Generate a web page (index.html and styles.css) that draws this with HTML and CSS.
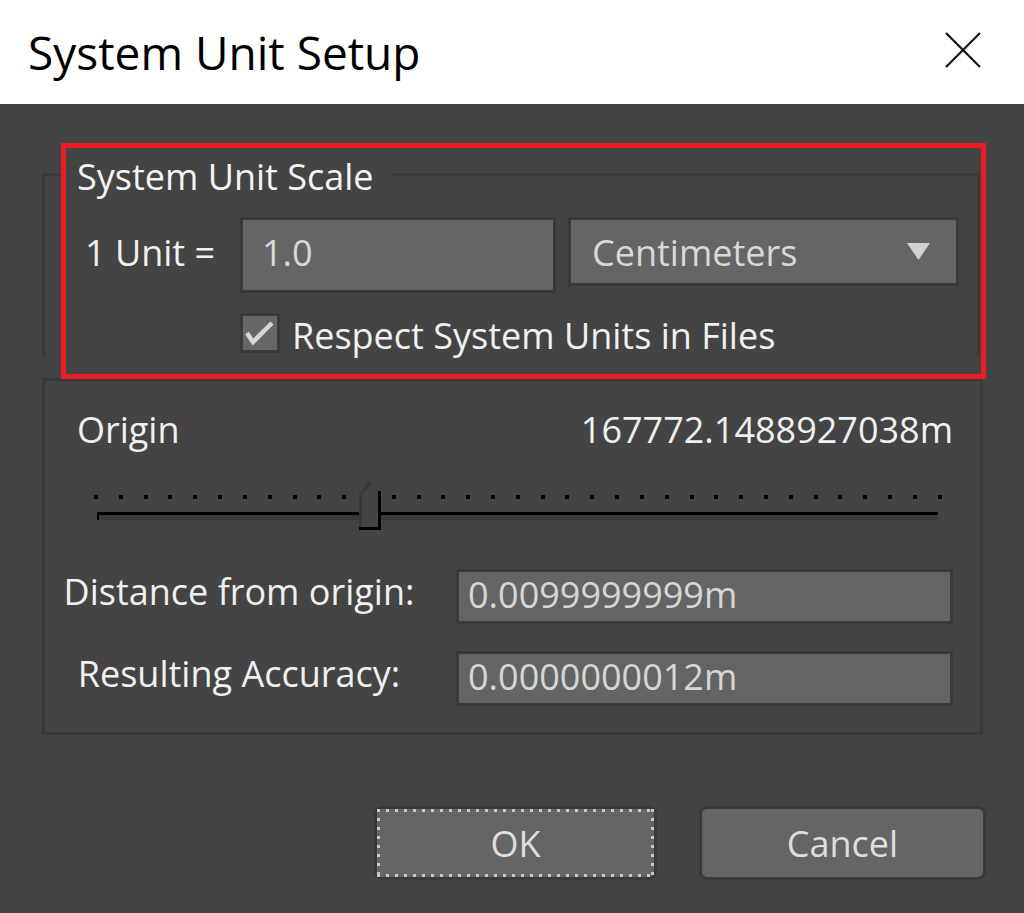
FILE: index.html
```html
<!DOCTYPE html>
<html lang="en">
<head>
<meta charset="utf-8">
<title>System Unit Setup</title>
<link rel="stylesheet" href="styles.css">
</head>
<body>
<div class="dialog">
  <header class="titlebar">
    <span class="title">System Unit Setup</span>
    <svg class="close" width="36" height="36" viewBox="0 0 36 36" aria-label="Close">
      <path d="M1 1 L35 35 M35 1 L1 35" stroke="#111" stroke-width="2.2" fill="none"/>
    </svg>
  </header>

  <main class="content">
    <fieldset class="group scale-group">
      <legend>System Unit Scale</legend>
      <div class="scale-grid">
        <span class="unit-label">1 Unit =</span>
        <div class="unit-fields">
          <div class="num-field">1.0</div>
          <div class="combo">
            <span>Centimeters</span>
            <svg class="combo-arrow" width="23" height="17" viewBox="0 0 23 17"><path d="M0 0 H23 L11.5 17 Z" fill="#d2d2d2"/></svg>
          </div>
        </div>
        <div class="check-row">
          <span class="checkbox">
            <svg width="34" height="34" viewBox="0 0 34 34"><path d="M4 17 L10 26 L29 7" stroke="#d6d6d6" stroke-width="4.5" fill="none"/></svg>
          </span>
          <span class="check-label">Respect System Units in Files</span>
        </div>
      </div>
    </fieldset>

    <section class="group origin-group">
      <div class="origin-row">
        <span>Origin</span>
        <span>167772.1488927038m</span>
      </div>
      <div class="slider">
        <div class="ticks">
          <i></i><i></i><i></i><i></i><i></i><i></i><i></i><i></i><i></i><i></i><i></i><i></i><i></i><i></i><i></i><i></i><i></i><i></i><i></i><i></i><i></i><i></i><i></i><i></i><i></i><i></i><i></i><i></i><i></i><i></i><i></i><i></i><i></i><i></i><i></i>
        </div>
        <div class="track"></div>
        <svg class="thumb" width="24" height="50" viewBox="0 0 24 50">
          <path d="M0 14 L11 1 L20 12 V47 H0 Z" fill="#444"/>
          <path d="M1.5 47 V14.5 L11 3" stroke="#383838" stroke-width="3" fill="none"/>
          <path d="M20.5 11 V48.5 H0" stroke="#000" stroke-width="3" fill="none"/>
        </svg>
      </div>
      <div class="info-grid">
        <span class="info-label">Distance from origin:</span>
        <div class="info-field">0.0099999999m</div>
        <span class="info-label">Resulting Accuracy:</span>
        <div class="info-field">0.0000000012m</div>
      </div>
    </section>

    <div class="buttons">
      <button class="btn btn-focus">OK</button>
      <button class="btn">Cancel</button>
    </div>
  </main>

  <div class="highlight"></div>
</div>
</body>
</html>
```

FILE: styles.css
```css
html, body {
  margin: 0;
  padding: 0;
}

body {
  width: 1024px;
  height: 913px;
  overflow: hidden;
  background: #444444;
  font-family: "Open Sans", "Noto Sans", sans-serif;
  color: #f0f0f0;
}

.dialog {
  position: relative;
  width: 1024px;
  height: 913px;
}

/* Title bar */
.titlebar {
  height: 104px;
  background: #ffffff;
  display: flex;
  justify-content: space-between;
  align-items: flex-start;
  padding: 0 43px 0 28px;
  box-sizing: border-box;
}

.title {
  font-size: 46px;
  line-height: 46px;
  margin-top: 29px;
  color: #000;
}

.close {
  margin-top: 32px;
  display: block;
}

/* Content */
.content {
  padding: 48px 41px 0 42px;
}

.group {
  border: 3px solid #3a3a3a;
  box-sizing: border-box;
}

.scale-group {
  margin: 0 3px 0 0;
  border-bottom: 0;
  padding: 21px 18px 1px 22px;
  min-inline-size: 0;
}

.scale-group legend {
  font-size: 36px;
  line-height: 39px;
  padding: 5px 18px 0 10px;
  color: #f4f4f4;
}

.scale-grid {
  display: grid;
  grid-template-columns: 155px auto;
  row-gap: 20px;
  margin-left: 18px;
}

.unit-label {
  font-size: 36px;
  line-height: 72px;
  white-space: nowrap;
}

.unit-fields {
  display: flex;
  align-items: flex-start;
  gap: 12px;
}

.num-field {
  width: 316px;
  height: 76px;
  box-sizing: border-box;
  border: 3px solid #3a3a3a;
  background: #656565;
  padding-left: 19px;
  font-size: 36px;
  line-height: 66px;
  color: #d8d8d8;
}

.combo {
  width: 391px;
  height: 69px;
  box-sizing: border-box;
  border: 3px solid #3a3a3a;
  background: #656565;
  padding: 0 26px 0 21px;
  display: flex;
  justify-content: space-between;
  align-items: center;
  font-size: 36px;
  color: #d8d8d8;
}

.combo span {
  align-self: flex-start;
  line-height: 66px;
}

.combo-arrow {
  display: block;
}

.check-row {
  grid-column: 2;
  display: flex;
  align-items: flex-start;
  gap: 12px;
}

.checkbox {
  width: 40px;
  height: 40px;
  box-sizing: border-box;
  border: 3px solid #3a3a3a;
  background: #676767;
  display: flex;
  align-items: center;
  justify-content: center;
}

.checkbox svg {
  display: block;
}

.check-label {
  font-size: 36px;
  line-height: 40px;
  padding-top: 3px;
  white-space: nowrap;
}

/* Origin group */
.origin-group {
  margin-top: 21px;
  width: 941px;
  padding: 27px 27px 26px 0;
}

.origin-row {
  display: flex;
  justify-content: space-between;
  padding-left: 32px;
  font-size: 36px;
  line-height: 44px;
}

.slider {
  position: relative;
  margin: 28px 0 0 49px;
  width: 848px;
  height: 50px;
  padding-top: 15px;
  box-sizing: border-box;
}

.ticks {
  display: flex;
  justify-content: space-between;
  height: 4px;
}

.ticks i {
  width: 4px;
  height: 4px;
  background: #000;
}

.track {
  margin: 13px 4px 0 3px;
  height: 8px;
  box-sizing: border-box;
  border-top: 3px solid #000;
  border-left: 2px solid #000;
  background: #393939;
}

.thumb {
  position: absolute;
  left: 265px;
  top: 0;
  display: block;
}

.info-grid {
  display: grid;
  grid-template-columns: 388px 497px;
  column-gap: 23px;
  row-gap: 27px;
  margin-top: 39px;
}

.info-label {
  text-align: center;
  font-size: 36px;
  line-height: 46px;
  white-space: nowrap;
}

.info-field {
  height: 55px;
  box-sizing: border-box;
  border: 3px solid #3a3a3a;
  background: #646464;
  padding-left: 9px;
  font-size: 36px;
  line-height: 46px;
  color: #d6d6d6;
}

/* Buttons */
.buttons {
  display: flex;
  justify-content: flex-end;
  gap: 42px;
  margin: 71px -3px 0 0;
}

.btn {
  position: relative;
  height: 74px;
  box-sizing: border-box;
  border: 3px solid #3a3a3a;
  border-radius: 8px;
  background: #656565;
  color: #dedede;
  font-family: inherit;
  font-size: 36px;
  line-height: 70px;
  padding: 0;
  width: 287px;
}

.btn-focus {
  width: 283px;
}

.btn-focus::after {
  content: "";
  position: absolute;
  inset: 0;
  background:
    repeating-linear-gradient(to right, #c8c8c8 0 3px, transparent 3px 9px) top left / 100% 3px no-repeat,
    repeating-linear-gradient(to right, #c8c8c8 0 3px, transparent 3px 9px) bottom left / 100% 3px no-repeat,
    repeating-linear-gradient(to bottom, #c8c8c8 0 3px, transparent 3px 9px) top left / 3px 100% no-repeat,
    repeating-linear-gradient(to bottom, #c8c8c8 0 3px, transparent 3px 9px) top right / 3px 100% no-repeat;
}

/* Annotation */
.highlight {
  position: absolute;
  left: 61px;
  top: 143px;
  width: 925px;
  height: 236px;
  box-sizing: border-box;
  border: 5px solid #ed1c24;
}
```
